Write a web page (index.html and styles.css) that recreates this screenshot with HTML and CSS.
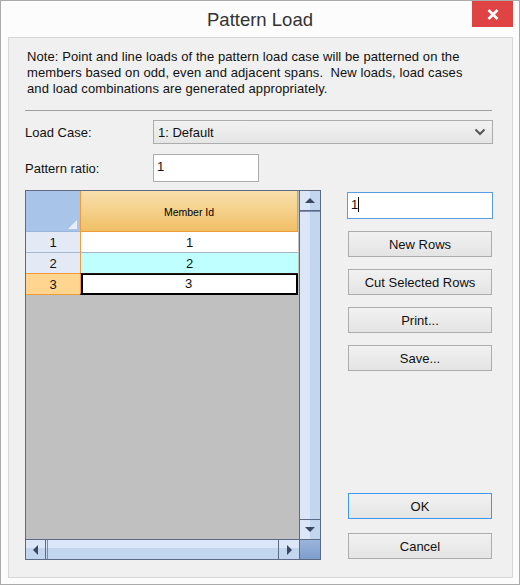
FILE: index.html
```html
<!DOCTYPE html>
<html lang="en">
<head>
    <meta charset="UTF-8">
    <meta name="viewport" content="width=device-width, initial-scale=1.0">
    <title>Pattern Load</title>
    <link rel="stylesheet" href="styles.css">
</head>
<body>
    <div class="window">
        <div class="titlebar">
            <div></div>
            <div class="title">Pattern Load</div>
            <div class="close">
                <svg width="12" height="11" viewBox="0 0 12 11"><path d="M1.5 1 L10.5 10 M10.5 1 L1.5 10" stroke="#fff" stroke-width="2.6"/></svg>
            </div>
        </div>
        <div class="panel">
            <p class="note">Note: Point and line loads of the pattern load case will be patterned on the<br>members based on odd, even and adjacent spans.&nbsp; New loads, load cases<br>and load combinations are generated appropriately.</p>
            <div class="separator"></div>

            <div class="field load-case">
                <label>Load Case:</label>
                <div class="dropdown">
                    <span>1: Default</span>
                    <svg width="12" height="8" viewBox="0 0 12 8"><path d="M1.5 1.5 L6 6 L10.5 1.5" fill="none" stroke="#555" stroke-width="2"/></svg>
                </div>
            </div>
            <div class="field ratio">
                <label>Pattern ratio:</label>
                <div class="textbox small">1</div>
            </div>

            <div class="main">
                <div class="grid">
                    <div class="grid-content">
                        <div class="grid-row head">
                            <div class="row-head corner"><span class="tri"></span></div>
                            <div class="cell col-head">Member Id</div>
                        </div>
                        <div class="grid-row">
                            <div class="row-head">1</div>
                            <div class="cell">1</div>
                        </div>
                        <div class="grid-row">
                            <div class="row-head before-current">2</div>
                            <div class="cell alt before-current">2</div>
                        </div>
                        <div class="grid-row">
                            <div class="row-head current">3</div>
                            <div class="cell current">3</div>
                        </div>
                    </div>
                    <div class="vscroll">
                        <div class="sb-btn up"><span class="arrow-up"></span></div>
                        <div class="vthumb"></div>
                        <div class="sb-btn down"><span class="arrow-down"></span></div>
                    </div>
                    <div class="hscroll">
                        <div class="sb-btn left"><span class="arrow-left"></span></div>
                        <div class="hthumb"></div>
                        <div class="sb-btn right"><span class="arrow-right"></span></div>
                    </div>
                    <div class="sb-corner"></div>
                </div>

                <div class="side">
                    <div class="textbox focus">1<span class="caret"></span></div>
                    <button class="btn first">New Rows</button>
                    <button class="btn">Cut Selected Rows</button>
                    <button class="btn">Print...</button>
                    <button class="btn">Save...</button>
                    <button class="btn ok">OK</button>
                    <button class="btn cancel">Cancel</button>
                </div>
            </div>
        </div>
    </div>
</body>
</html>
```

FILE: styles.css
```css
body {
    margin: 0;
    font-family: "Liberation Sans", Arial, sans-serif;
    font-size: 13px;
    color: #111;
    background: #fff;
}
.window {
    box-sizing: border-box;
    width: 520px;
    height: 585px;
    border: 1px solid #aaaaaa;
    background: #fcfcfc;
}
.titlebar {
    display: grid;
    grid-template-columns: 1fr auto 1fr;
    height: 36px;
}
.title {
    font-size: 18.5px;
    line-height: 37px;
    color: #333;
}
.close {
    justify-self: end;
    width: 41px;
    height: 26px;
    margin: 0 6px 0 0;
    background: #e04343;
    display: flex;
    align-items: center;
    justify-content: center;
}
.panel {
    box-sizing: border-box;
    height: 541px;
    margin: 0 6px 0 7px;
    border: 1px solid #d6d6d6;
    background: #f0f0f0;
    padding: 11px 19px 0 16px;
}
.note {
    margin: 0 0 0 2px;
    line-height: 16px;
    letter-spacing: 0.09px;
    white-space: nowrap;
}
.separator {
    margin-top: 13px;
    width: 467px;
    border-top: 1px solid #a0a0a0;
}
.field {
    display: flex;
    align-items: center;
}
.field label {
    width: 128px;
}
.load-case {
    margin-top: 9px;
}
.ratio {
    margin-top: 10px;
}
.dropdown {
    box-sizing: border-box;
    width: 340px;
    height: 24px;
    border: 1px solid #acacac;
    background: linear-gradient(#f2f2f2, #e5e5e5);
    display: flex;
    align-items: center;
    justify-content: space-between;
    padding: 0 4px 0 4px;
}
.dropdown svg {
    margin-right: 2px;
}
.textbox {
    box-sizing: border-box;
    border: 1px solid #acacac;
    background: #fff;
    padding: 4px 3px 0 3px;
}
.textbox.small {
    width: 106px;
    height: 28px;
}
.main {
    margin-top: 8px;
    display: flex;
    height: 370px;
}
.grid {
    box-sizing: border-box;
    width: 296px;
    height: 370px;
    border: 1px solid #5d6a85;
    display: grid;
    grid-template-columns: 273px 21px;
    grid-template-rows: 348px 20px;
}
.grid-content {
    background: #c0c0c0;
}
.grid-row {
    display: grid;
    grid-template-columns: 54px 217px;
    height: 21px;
}
.grid-row.head {
    height: 41px;
}
.row-head, .cell {
    box-sizing: border-box;
    display: flex;
    align-items: center;
    justify-content: center;
}
.row-head {
    background: #e3eaf6;
    border-bottom: 1px solid #a5b8d2;
}
.cell {
    width: 218px;
    background: #fff;
    border-left: 1px solid #f29b3a;
    border-bottom: 1px solid #a7b2c4;
}
.corner {
    background: #a9c4e9;
    border-bottom-color: #9bb6dc;
    align-items: flex-end;
    justify-content: flex-end;
    padding: 0 3px 2px 0;
}
.tri {
    width: 9px;
    height: 9px;
    background: #e9eff8;
    clip-path: polygon(100% 0, 100% 100%, 0 100%);
}
.col-head {
    background: linear-gradient(#f9e0ad, #f0c066);
    border-bottom: 1px solid #f29b3a;
    border-right: 1px solid #f29b3a;
    font-size: 10.5px;
    color: #000;
    padding-top: 1px;
}
.cell.alt {
    background: #c0ffff;
}
.row-head.before-current {
    border-bottom-color: #f29b3a;
}
.cell.before-current {
    border-bottom-color: #2a1a10;
}
.row-head.current {
    background: #ffd590;
    border-bottom-color: #f29b3a;
}
.cell.current {
    border-bottom: 2px solid #000;
    border-right: 2px solid #000;
    box-shadow: inset 2px 1px 0 #000;
}
.vscroll {
    box-sizing: border-box;
    display: flex;
    flex-direction: column;
    border-left: 1px solid #5d6a85;
    background: linear-gradient(to right, #dbe7f8 50%, #c3d6f0 50%);
}
.sb-btn {
    box-sizing: border-box;
    display: flex;
    align-items: center;
    justify-content: center;
    background: linear-gradient(to right, #dbe7f8 50%, #c3d6f0 50%);
}
.vscroll .sb-btn {
    height: 20px;
}
.vscroll .up {
    border-bottom: 1px solid #5d6a85;
}
.vthumb {
    flex: 1;
    border-top: 1px solid #7d8db0;
}
.vscroll .down {
    height: 20px;
    border-top: 1px solid #5d6a85;
}
.hscroll {
    box-sizing: border-box;
    display: flex;
    border-top: 1px solid #5d6a85;
    background: linear-gradient(#dbe7f8 40%, #c3d6f0 40%);
}
.hscroll .sb-btn {
    width: 20px;
    background: linear-gradient(#dbe7f8 40%, #c3d6f0 40%);
}
.hscroll .left {
    border-right: 1px solid #5d6a85;
}
.hthumb {
    flex: 1;
    margin-left: 1px;
    border-left: 1px solid #7d8db0;
    border-right: 1px solid #5d6a85;
}
.sb-corner {
    border-top: 1px solid #5d6a85;
    border-left: 1px solid #5d6a85;
    background: linear-gradient(#9bb4dc, #7f9dcc);
}
.arrow-up {
    border-left: 5px solid transparent;
    border-right: 5px solid transparent;
    border-bottom: 5px solid #3b4663;
}
.arrow-down {
    border-left: 5px solid transparent;
    border-right: 5px solid transparent;
    border-top: 5px solid #3b4663;
}
.arrow-left {
    border-top: 5px solid transparent;
    border-bottom: 5px solid transparent;
    border-right: 5px solid #3b4663;
}
.arrow-right {
    border-top: 5px solid transparent;
    border-bottom: 5px solid transparent;
    border-left: 5px solid #3b4663;
}
.side {
    width: 146px;
    margin-left: 26px;
    padding: 2px 0 1px;
    display: flex;
    flex-direction: column;
}
.textbox.focus {
    height: 27px;
    border-color: #569de5;
    padding: 4px 2px 0 3px;
    display: flex;
    align-items: flex-start;
}
.caret {
    display: inline-block;
    width: 1px;
    height: 15px;
    background: #000;
}
.btn {
    box-sizing: border-box;
    width: 144px;
    height: 26px;
    margin: 12px 0 0 1px;
    border: 1px solid #adadad;
    background: linear-gradient(#f1f1f1, #e4e4e4);
    font-family: "Liberation Sans", Arial, sans-serif;
    font-size: 13px;
    color: #111;
    padding: 0;
}
.btn.ok {
    margin-top: auto;
    border-color: #3c98ee;
}
.btn.cancel {
    margin-top: 14px;
}
```
